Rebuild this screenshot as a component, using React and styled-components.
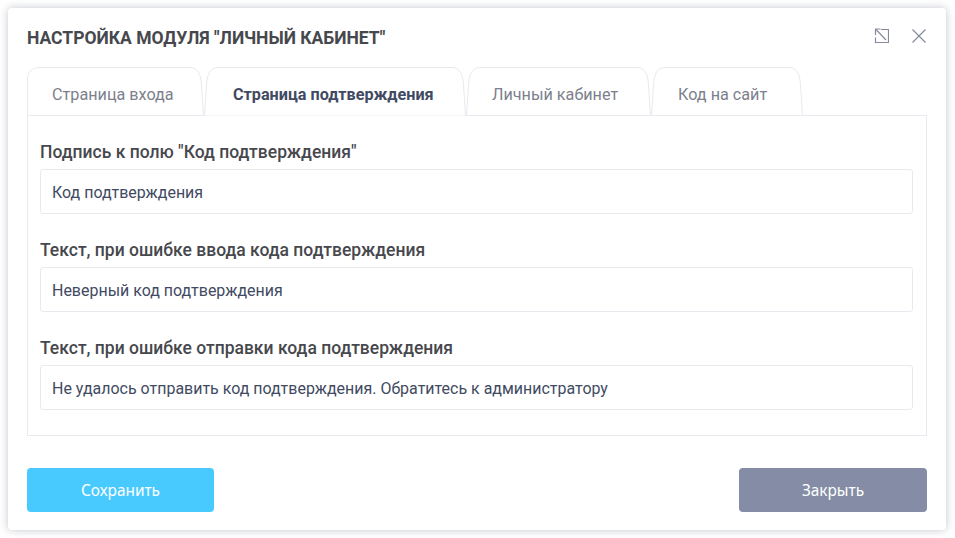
import React from 'react'
import styled, { createGlobalStyle } from 'styled-components'

const Global = createGlobalStyle`
    html, body {
        margin: 0;
        padding: 0;
        background: #fff;
    }
    body {
        font-family: Roboto, "Liberation Sans", sans-serif;
    }
`

const Page = styled.div`
    width: 955px;
    height: 538px;
    padding: 8px 9px 8px 8px;
    box-sizing: border-box;
`

const Modal = styled.div`
    width: 938px;
    height: 522px;
    box-sizing: border-box;
    padding: 0 19px 18px;
    background: #fff;
    border-radius: 4px;
    box-shadow: 0 0 9px rgba(60, 66, 90, 0.3);
    display: flex;
    flex-direction: column;
`

const Header = styled.div`
    height: 59px;
    display: flex;
    align-items: center;
    justify-content: space-between;
`

const Title = styled.h2`
    margin: 0;
    font-size: 17.5px;
    font-weight: 700;
    color: #47484d;
`

const HeaderIcons = styled.div`
    display: flex;
    align-items: center;
    gap: 22px;
    margin: 0 0 3px;
`

const IconButton = styled.button`
    width: 16px;
    height: 16px;
    padding: 0;
    border: 0;
    background: none;
    display: block;
    color: #858b9c;
`

const Tabs = styled.div`
    display: flex;
    height: 49px;
    position: relative;
    margin-bottom: -1px;
    z-index: 1;
`

const Tab = styled.div`
    position: relative;
    width: ${props => props.w}px;
    height: 49px;
    box-sizing: border-box;
    padding-left: ${props => props.pad}px;
    padding-top: 6px;
    display: flex;
    align-items: center;
    font-size: 16.2px;
    font-weight: ${props => props.active ? 700 : 400};
    color: ${props => props.active ? '#414a62' : '#7c7f8c'};
`

const TabLabel = styled.span`
    position: relative;
    white-space: nowrap;
`

const TabShape = styled.svg`
    position: absolute;
    left: 0;
    top: 0;
`

const Panel = styled.div`
    height: 321px;
    box-sizing: border-box;
    border: 1px solid #e8eaf0;
    padding: 26px 13px 0 12px;
    display: flex;
    flex-direction: column;
    gap: 26px;
`

const Field = styled.div`
    display: flex;
    flex-direction: column;
`

const Label = styled.label`
    font-size: 17.5px;
    font-weight: 500;
    line-height: 20px;
    color: #47484d;
    margin-bottom: 7px;
`

const Input = styled.div`
    height: 45px;
    box-sizing: border-box;
    border: 1px solid #e8eaf0;
    border-radius: 3px;
    padding: 1px 11px 0;
    display: flex;
    align-items: center;
    font-size: 15.97px;
    color: #414a62;
`

const Footer = styled.div`
    margin-top: auto;
    display: flex;
    justify-content: space-between;
`

const Button = styled.button`
    width: ${props => props.w}px;
    height: 44px;
    border: 0;
    border-radius: 4px;
    background: ${props => props.bg};
    color: #fff;
    font-family: "Noto Sans", "Open Sans", sans-serif;
    font-size: 15.4px;
    padding: 0;
`

const tabs = [
    { label: 'Страница входа', w: 177, pad: 25 },
    { label: 'Страница подтверждения', w: 262, pad: 29, active: true },
    { label: 'Личный кабинет', w: 185, pad: 26 },
    { label: 'Код на сайт', w: 152, pad: 27 },
]

const fields = [
    { label: 'Подпись к полю "Код подтверждения"', value: 'Код подтверждения' },
    { label: 'Текст, при ошибке ввода кода подтверждения', value: 'Неверный код подтверждения' },
    { label: 'Текст, при ошибке отправки кода подтверждения', value: 'Не удалось отправить код подтверждения. Обратитесь к администратору' },
]

// right edge is the same on every tab, only the first one has a straight left edge
const tabPath = (w, first, active) => {
    const left = first
        ? 'M0.5 48.5V13C0.5 5 5 0.5 13 0.5'
        : 'M0.5 48.5L2.5 18C3 8 6 0.5 14 0.5'
    const right = `H${w - 14}C${w - 6} 0.5 ${w - 3} 8 ${w - 2.5} 18L${w - 0.5} 48.5`
    return left + right + (active ? '' : 'Z')
}

const TabOutline = ({ w, first, active }) => (
    <TabShape width={w} height="49" viewBox={`0 0 ${w} 49`} fill="none">
        <path d={tabPath(w, first, active)} stroke="#e8eaf0" fill="#fff" />
    </TabShape>
)

const App = () => {
    return (
        <Page>
            <Global />
            <Modal>
                <Header>
                    <Title>НАСТРОЙКА МОДУЛЯ "ЛИЧНЫЙ КАБИНЕТ"</Title>
                    <HeaderIcons>
                        <IconButton>
                            <svg width="16" height="16" viewBox="0 0 16 16" fill="none" stroke="currentColor" strokeWidth="1.2">
                                <path d="M8 1.5H15.5V14.5H2.5V9.5" />
                                <path d="M3 1.5L13 12" />
                                <path d="M2.5 7V1H7.5" />
                            </svg>
                        </IconButton>
                        <IconButton>
                            <svg width="16" height="16" viewBox="0 0 16 16" fill="none" stroke="currentColor" strokeWidth="1.2">
                                <path d="M1.5 1.5L14.5 14.5M14.5 1.5L1.5 14.5" />
                            </svg>
                        </IconButton>
                    </HeaderIcons>
                </Header>
                <Tabs>
                    {tabs.map((t, i) => (
                        <Tab key={t.label} w={t.w} pad={t.pad} active={t.active}>
                            <TabOutline w={t.w} first={i === 0} active={t.active} />
                            <TabLabel>{t.label}</TabLabel>
                        </Tab>
                    ))}
                </Tabs>
                <Panel>
                    {fields.map(f => (
                        <Field key={f.label}>
                            <Label>{f.label}</Label>
                            <Input>{f.value}</Input>
                        </Field>
                    ))}
                </Panel>
                <Footer>
                    <Button w={187} bg="#48caff">Сохранить</Button>
                    <Button w={188} bg="#848da5">Закрыть</Button>
                </Footer>
            </Modal>
        </Page>
    )
}

export default App
